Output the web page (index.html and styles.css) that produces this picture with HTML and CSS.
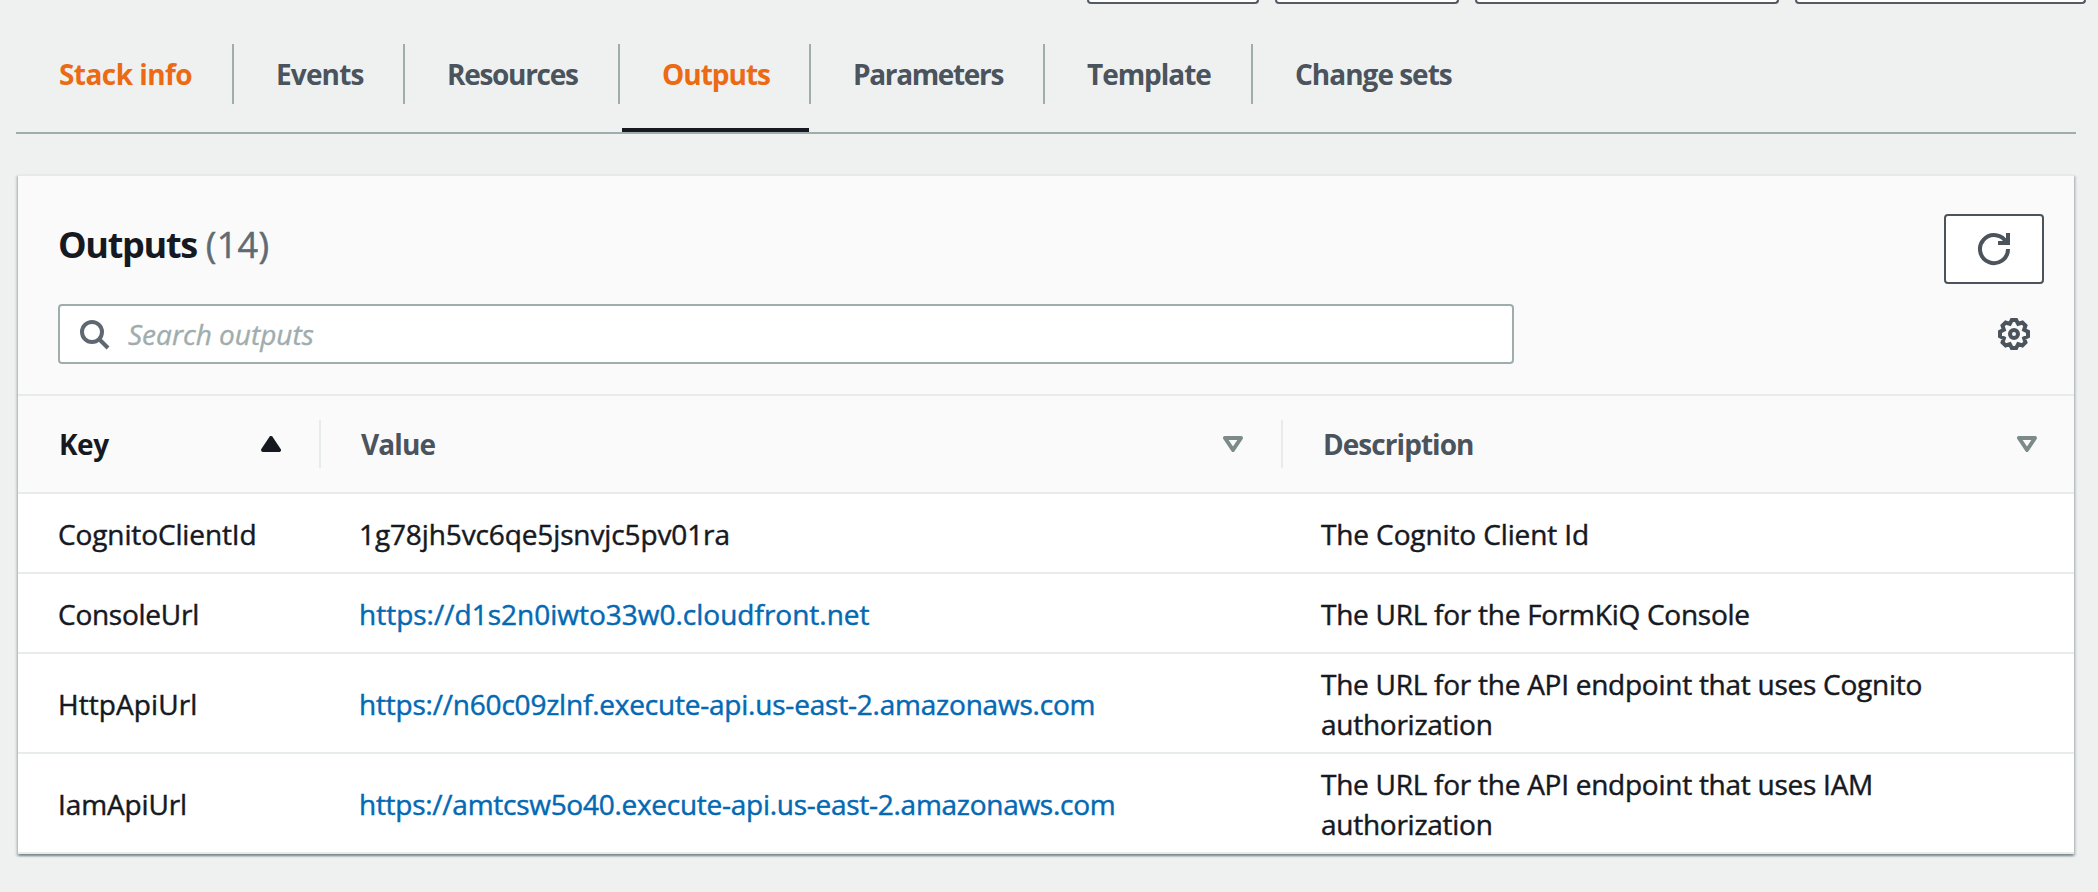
FILE: index.html
```html
<!DOCTYPE html>
<html lang="en">
<head>
<meta charset="utf-8">
<title>Stack outputs</title>
<link rel="stylesheet" href="styles.css">
</head>
<body>
<div class="actions">
  <span class="action action-a"></span>
  <span class="action action-b"></span>
  <span class="action action-c"></span>
  <span class="action action-d"></span>
</div>

<nav class="tabs">
  <a class="tab tab-info accent"><span class="tab-label">Stack info</span></a>
  <a class="tab tab-events"><span class="tab-label">Events</span></a>
  <a class="tab tab-resources"><span class="tab-label">Resources</span></a>
  <a class="tab tab-outputs accent active"><span class="tab-label">Outputs</span></a>
  <a class="tab tab-parameters"><span class="tab-label">Parameters</span></a>
  <a class="tab tab-template"><span class="tab-label">Template</span></a>
  <a class="tab tab-changes"><span class="tab-label">Change sets</span></a>
</nav>

<main class="panel">
  <header class="panel-head">
    <div class="title-row">
      <h2 class="title">Outputs<span class="count">(14)</span></h2>
      <button class="refresh" aria-label="Refresh">
        <svg class="icon" viewBox="0 0 16 16"><path d="M10 5h5V0"/><path d="M15 8a7 7 0 1 1-.7-3"/></svg>
      </button>
    </div>
    <div class="filter-row">
      <div class="search">
        <svg class="icon" viewBox="0 0 16 16"><circle cx="7" cy="7" r="5"/><path d="M15 15l-4.5-4.5"/></svg>
        <span class="placeholder">Search outputs</span>
      </div>
      <svg class="icon gear" viewBox="-8 -8 16 16"><circle r="2"/><path d="M-1.1-7H1.1L2.1-5.07L4.17-5.73L5.73-4.17L5.07-2.1L7-1.1V1.1L5.07 2.1L5.73 4.17L4.17 5.73L2.1 5.07L1.1 7H-1.1L-2.1 5.07L-4.17 5.73L-5.73 4.17L-5.07 2.1L-7 1.1V-1.1L-5.07-2.1L-5.73-4.17L-4.17-5.73L-2.1-5.07Z"/></svg>
    </div>
  </header>

  <div class="row head-row">
    <div class="th sorted"><span class="t-key">Key</span><svg class="sort" viewBox="0 0 20 16"><path class="solid" d="M10 2L18 14H2Z"/></svg></div>
    <div class="th"><span class="t-value">Value</span><svg class="sort" viewBox="0 0 20 16"><path d="M2 2H18L10 14Z"/></svg></div>
    <div class="th"><span class="t-desc">Description</span><svg class="sort" viewBox="0 0 20 16"><path d="M2 2H18L10 14Z"/></svg></div>
  </div>
  <div class="row">
    <div class="td"><span class="k1">CognitoClientId</span></div>
    <div class="td"><span class="v1">1g78jh5vc6qe5jsnvjc5pv01ra</span></div>
    <div class="td"><span class="d1">The Cognito Client Id</span></div>
  </div>
  <div class="row">
    <div class="td"><span class="k2">ConsoleUrl</span></div>
    <div class="td"><a class="link">https://d1s2n0iwto33w0.cloudfront.net</a></div>
    <div class="td"><span class="d2">The URL for the FormKiQ Console</span></div>
  </div>
  <div class="row">
    <div class="td"><span class="k3">HttpApiUrl</span></div>
    <div class="td"><a class="link v3">https://n60c09zlnf.execute-api.us-east-2.amazonaws.com</a></div>
    <div class="td"><span class="d2">The URL for the API endpoint that uses Cognito<br>authorization</span></div>
  </div>
  <div class="row">
    <div class="td"><span class="k1">IamApiUrl</span></div>
    <div class="td"><a class="link v4">https://amtcsw5o40.execute-api.us-east-2.amazonaws.com</a></div>
    <div class="td"><span class="d2">The URL for the API endpoint that uses IAM<br>authorization</span></div>
  </div>
</main>
</body>
</html>
```
FILE: styles.css
```css
* { box-sizing: border-box; }

body {
  margin: 0;
  height: 892px;
  overflow: hidden;
  background: #eff1f1;
  color: #16191f;
  font: 500 28px/40px "Open Sans", "Noto Sans", sans-serif;
}

/* Buttons cut off by the top edge of the view */
.actions {
  display: flex;
  justify-content: flex-end;
  gap: 16px;
  height: 4px;
  padding-right: 12px;
}
.action {
  height: 4px;
  background: #fff;
  border: 2px solid #545b64;
  border-top: 0;
  border-radius: 0 0 4px 4px;
}
.action-a { width: 172px; }
.action-b { width: 184px; }
.action-c { width: 304px; }
.action-d { width: 291px; }

.tabs {
  display: flex;
  margin: 0 22px 0 16px;
  height: 130px;
  border-bottom: 2px solid #9fadad;
  color: #4b535c;
  font-weight: 700;
}
.tab {
  display: flex;
  padding-top: 40px;
  height: 128px;
}
.tab-label {
  flex: 1;
  height: 60px;
  padding-left: 42px;
  line-height: 61px;
  margin-bottom: 24px;
  border-right: 2px solid #9fadad;
  white-space: nowrap;
}
.tab-changes .tab-label { border-right: 0; }
.accent { color: #eb6a13; }
.active {
  background: linear-gradient(#16191f, #16191f) 2px 100% / 187px 4px no-repeat;
}
.tab-info { width: 218px; letter-spacing: -.55px; }
.tab-info .tab-label { padding-left: 43px; }
.tab-events { width: 171px; letter-spacing: -.85px; }
.tab-resources { width: 215px; letter-spacing: -1.3px; }
.tab-outputs { width: 191px; letter-spacing: -1px; }
.tab-parameters { width: 234px; letter-spacing: -1.35px; }
.tab-template { width: 208px; letter-spacing: -1.05px; }
.tab-changes { width: 220px; letter-spacing: -1px; }

.panel {
  width: 2056px;
  margin: 40px 0 0 18px;
  border-top: 2px solid #e7eaea;
  background: #fff;
  box-shadow: 0 2px 2px rgba(0, 28, 36, .3), 2px 2px 2px rgba(0, 28, 36, .15), -2px 2px 2px rgba(0, 28, 36, .15);
}
.panel-head {
  height: 220px;
  padding: 38px 30px 0 40px;
  background: #fafafa;
  border-bottom: 2px solid #e7ebea;
}
.title-row {
  display: flex;
  justify-content: space-between;
  height: 70px;
}
.title {
  margin: 7px 0 0;
  font-size: 36px;
  line-height: 48px;
  letter-spacing: -1.3px;
}
.count {
  margin-left: 9px;
  color: #5f6b73;
  font-weight: 500;
  letter-spacing: .3px;
  -webkit-text-stroke: .5px;
}
.refresh {
  display: grid;
  place-items: center;
  width: 100px;
  height: 70px;
  padding: 0;
  background: #fff;
  border: 2px solid #4b535c;
  border-radius: 4px;
}
.icon {
  display: block;
  width: 32px;
  height: 32px;
  overflow: visible;
  fill: none;
  stroke: #4b545c;
  stroke-width: 2;
}
.filter-row {
  display: flex;
  justify-content: space-between;
  align-items: center;
  margin-top: 20px;
}
.search {
  display: flex;
  align-items: center;
  width: 1456px;
  height: 60px;
  padding-left: 18px;
  gap: 18px;
  background: #fff;
  border: 2px solid #9fadad;
  border-radius: 4px;
}
.search .icon { stroke: #5f6870; }
.placeholder {
  color: #9fadad;
  font-style: italic;
  font-weight: 400;
  -webkit-text-stroke: .4px;
}
.gear { margin-right: 14px; }

.row {
  display: grid;
  grid-template-columns: 302px 962px 792px;
  align-items: center;
  padding: 18px 0;
  border-bottom: 2px solid #e7ebea;
}
.row:nth-child(n+3) { min-height: 80px; }
.row:nth-child(n+5) { padding: 8px 0; height: 100px; }
.row .td { padding-top: 2px; }
.td {
  padding-left: 40px;
  white-space: nowrap;
  -webkit-text-stroke: .45px;
}
.td + .td { padding-left: 39px; }
.head-row {
  height: 98px;
  padding: 0;
  background: #fafafa;
  color: #4b545c;
  font-weight: 700;
}
.th {
  display: flex;
  align-items: center;
  justify-content: space-between;
  width: calc(100% + 1px);
  height: 48px;
  padding: 0 38px 0 41px;
  line-height: 42px;
  border-right: 2px solid #e7ebea;
}
.th:last-child { border-right: 0; }
.sorted { color: #16191f; }
.sort {
  width: 20px;
  height: 16px;
  fill: none;
  stroke: #7d8a8a;
  stroke-width: 4;
  stroke-linejoin: round;
}
.solid { fill: #16191f; stroke: #16191f; }

.t-key { letter-spacing: -.5px; }
.t-value { letter-spacing: -.9px; }
.t-desc { letter-spacing: -.95px; }
.k1, .v1, .d1 { letter-spacing: -.12px; }
.k2, .d2 { letter-spacing: -.26px; }
.k3 { letter-spacing: .08px; }
.link { color: #0369b3; }
.v3 { letter-spacing: -.21px; }
.v4 { letter-spacing: -.27px; }
```
